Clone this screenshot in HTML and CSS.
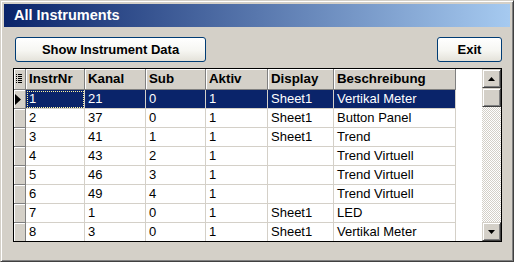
FILE: index.html
```html
<!DOCTYPE html>
<html lang="en">
<head>
    <meta charset="UTF-8">
    <title>All Instruments</title>
    <link rel="stylesheet" href="styles.css">
</head>
<body>
    <div class="window">
        <div class="titlebar">All Instruments</div>

        <div class="toolbar">
            <button class="xp-button wide">Show Instrument Data</button>
            <button class="xp-button narrow">Exit</button>
        </div>

        <div class="grid">
            <div class="grid-body">
                <div class="row header">
                    <div class="cell rowhead corner">
                        <svg width="7" height="10" viewBox="0 0 7 10">
                            <rect x="0" y="0" width="1" height="1" fill="#000"/>
                            <rect x="0" y="2" width="1" height="1" fill="#000"/>
                            <rect x="0" y="4" width="1" height="1" fill="#000"/>
                            <rect x="0" y="6" width="1" height="1" fill="#000"/>
                            <rect x="0" y="8" width="1" height="1" fill="#000"/>
                            <rect x="2" y="0" width="4" height="1" fill="#000"/>
                            <rect x="2" y="2" width="4" height="1" fill="#000"/>
                            <rect x="2" y="4" width="4" height="1" fill="#000"/>
                            <rect x="2" y="6" width="4" height="1" fill="#000"/>
                            <rect x="2" y="8" width="4" height="1" fill="#000"/>
                        </svg>
                    </div>
                    <div class="cell">InstrNr</div>
                    <div class="cell">Kanal</div>
                    <div class="cell">Sub</div>
                    <div class="cell">Aktiv</div>
                    <div class="cell">Display</div>
                    <div class="cell">Beschreibung</div>
                </div>

                <div class="row selected">
                    <div class="cell rowhead">
                        <svg width="6" height="11" viewBox="0 0 6 11"><path d="M0 0 L6 5.5 L0 11 Z" fill="#000"/></svg>
                    </div>
                    <div class="cell focus">1</div>
                    <div class="cell">21</div>
                    <div class="cell">0</div>
                    <div class="cell">1</div>
                    <div class="cell">Sheet1</div>
                    <div class="cell">Vertikal Meter</div>
                </div>
                <div class="row">
                    <div class="cell rowhead"></div>
                    <div class="cell">2</div>
                    <div class="cell">37</div>
                    <div class="cell">0</div>
                    <div class="cell">1</div>
                    <div class="cell">Sheet1</div>
                    <div class="cell">Button Panel</div>
                </div>
                <div class="row">
                    <div class="cell rowhead"></div>
                    <div class="cell">3</div>
                    <div class="cell">41</div>
                    <div class="cell">1</div>
                    <div class="cell">1</div>
                    <div class="cell">Sheet1</div>
                    <div class="cell">Trend</div>
                </div>
                <div class="row">
                    <div class="cell rowhead"></div>
                    <div class="cell">4</div>
                    <div class="cell">43</div>
                    <div class="cell">2</div>
                    <div class="cell">1</div>
                    <div class="cell"></div>
                    <div class="cell">Trend Virtuell</div>
                </div>
                <div class="row">
                    <div class="cell rowhead"></div>
                    <div class="cell">5</div>
                    <div class="cell">46</div>
                    <div class="cell">3</div>
                    <div class="cell">1</div>
                    <div class="cell"></div>
                    <div class="cell">Trend Virtuell</div>
                </div>
                <div class="row">
                    <div class="cell rowhead"></div>
                    <div class="cell">6</div>
                    <div class="cell">49</div>
                    <div class="cell">4</div>
                    <div class="cell">1</div>
                    <div class="cell"></div>
                    <div class="cell">Trend Virtuell</div>
                </div>
                <div class="row">
                    <div class="cell rowhead"></div>
                    <div class="cell">7</div>
                    <div class="cell">1</div>
                    <div class="cell">0</div>
                    <div class="cell">1</div>
                    <div class="cell">Sheet1</div>
                    <div class="cell">LED</div>
                </div>
                <div class="row">
                    <div class="cell rowhead"></div>
                    <div class="cell">8</div>
                    <div class="cell">3</div>
                    <div class="cell">0</div>
                    <div class="cell">1</div>
                    <div class="cell">Sheet1</div>
                    <div class="cell">Vertikal Meter</div>
                </div>
            </div>

            <div class="scrollbar">
                <div class="sb-button">
                    <svg width="7" height="4" viewBox="0 0 7 4"><path d="M3.5 0 L7 4 L0 4 Z" fill="#000"/></svg>
                </div>
                <div class="sb-thumb"></div>
                <div class="sb-track"></div>
                <div class="sb-button">
                    <svg width="7" height="4" viewBox="0 0 7 4"><path d="M0 0 L7 0 L3.5 4 Z" fill="#000"/></svg>
                </div>
            </div>
        </div>
    </div>
</body>
</html>
```

FILE: styles.css
```css
body {
    margin: 0;
    font-family: "Liberation Sans", Arial, sans-serif;
}
.window {
    width: 514px;
    height: 262px;
    box-sizing: border-box;
    background: #d4d0c8;
    border: 1px solid;
    border-color: #d4d0c8 #404040 #404040 #d4d0c8;
    box-shadow: inset 1px 1px #fff, inset -1px -1px #808080;
    padding: 3px;
}
.titlebar {
    height: 23px;
    line-height: 23px;
    padding-left: 10px;
    color: #fff;
    font-weight: bold;
    font-size: 14.5px;
    background: linear-gradient(to right, #0a246a, #a6caf0);
}
.toolbar {
    display: flex;
    justify-content: space-between;
    margin-top: 10px;
    padding: 0 8px 0 11px;
}
.xp-button {
    height: 25px;
    border: 1px solid #003c74;
    border-radius: 3px;
    background: linear-gradient(#ffffff 0%, #f6f6f2 55%, #e4e2da 100%);
    font-family: "Liberation Sans", Arial, sans-serif;
    font-weight: bold;
    font-size: 13px;
    color: #000;
    padding: 0;
}
.xp-button.wide {
    width: 191px;
}
.xp-button.narrow {
    width: 65px;
}
.grid {
    display: flex;
    height: 174px;
    box-sizing: border-box;
    margin: 6px 8px 0 9px;
    border: 1px solid #000;
    background: #fff;
}
.grid-body {
    flex: 1;
    overflow: hidden;
}
.row {
    display: grid;
    grid-template-columns: 12px 59px 61px 60px 62px 66px 122px;
    height: 19px;
    font-size: 13px;
}
.cell {
    box-sizing: border-box;
    padding-left: 3px;
    line-height: 18px;
    white-space: nowrap;
    overflow: hidden;
    border-right: 1px solid #d4d0c8;
    border-bottom: 1px solid #d4d0c8;
}
.header {
    height: 21px;
}
.header .cell {
    background: #d4d0c8;
    font-weight: bold;
    font-size: 13.3px;
    line-height: 20px;
    border-color: #808080;
    box-shadow: inset 1px 1px #fff;
}
.rowhead {
    padding: 0;
    background: #d4d0c8;
    border-color: #808080;
    box-shadow: inset 1px 1px #fff;
    display: flex;
    align-items: center;
    justify-content: center;
}
.header .corner {
    display: flex;
}
.selected .cell {
    background: #0a246a;
    color: #fff;
}
.selected .rowhead {
    background: #d4d0c8;
    justify-content: flex-start;
    padding-left: 1px;
}
.selected .focus {
    outline: 1px dotted #fff6a0;
    outline-offset: -2px;
}
.scrollbar {
    width: 19px;
    display: flex;
    flex-direction: column;
}
.sb-button,
.sb-thumb {
    height: 19px;
    box-sizing: border-box;
    background: #d4d0c8;
    border: 1px solid;
    border-color: #d4d0c8 #404040 #404040 #d4d0c8;
    box-shadow: inset 1px 1px #fff, inset -1px -1px #808080;
    display: flex;
    align-items: center;
    justify-content: center;
}
.sb-track {
    flex: 1;
    background: repeating-conic-gradient(#d4d0c8 0 25%, #fff 0 50%) 0 0 / 2px 2px;
}
```
